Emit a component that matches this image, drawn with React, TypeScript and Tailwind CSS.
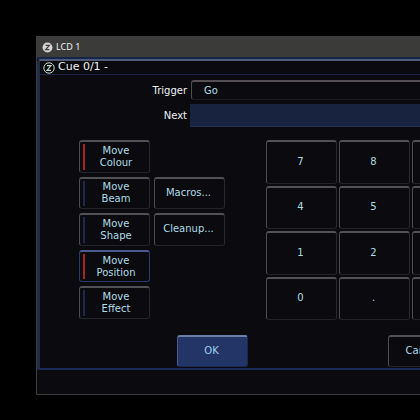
import { useState } from 'react'
import type { ReactNode } from 'react'
import clsx from 'clsx'

const OPTIONS = [
  { id: 'colour', label: 'Colour', on: true },
  { id: 'beam', label: 'Beam', on: false },
  { id: 'shape', label: 'Shape', on: false },
  { id: 'position', label: 'Position', on: true },
  { id: 'effect', label: 'Effect', on: false },
]

const KEYS = ['7', '8', '9', '4', '5', '6', '1', '2', '3', '0', '.', '/']

interface KeyProps {
  children: ReactNode
  className?: string
  onClick?: () => void
}

// bevelled console key: lit along the top and left, dark on the other two sides
function Key({ children, className, onClick }: KeyProps) {
  return (
    <button
      type="button"
      onClick={onClick}
      className={clsx(
        'cursor-pointer rounded-[3px] border border-t-2 border-b-[#232429] border-l-[#4c4d51] border-r-[#292a2f] border-t-[#515256] pr-0.5 text-center',
        className,
      )}
    >
      {children}
    </button>
  )
}

interface MoveToggleProps {
  label: string
  on: boolean
  focused: boolean
  onClick: () => void
}

function MoveToggle({ label, on, focused, onClick }: MoveToggleProps) {
  return (
    <button
      type="button"
      aria-pressed={on}
      onClick={onClick}
      className={clsx(
        'flex cursor-pointer items-stretch rounded-[3px] border border-t-2 pl-[3px] pr-0.5',
        focused
          ? 'border-[#2a3a70] border-t-[#4a5a8c]'
          : 'border-b-[#232429] border-l-[#4c4d51] border-r-[#292a2f] border-t-[#515256]',
      )}
    >
      <span className={clsx('my-0.5 w-0.5', on ? 'bg-[#a82424]' : 'bg-[#1e2750]')} />
      <span className="flex-1 self-center text-center leading-3">
        Move
        <br />
        {label}
      </span>
    </button>
  )
}

export default function App() {
  const [options, setOptions] = useState(OPTIONS)
  const [focused, setFocused] = useState('position')
  const [next, setNext] = useState('')

  const toggle = (id: string) => {
    setFocused(id)
    setOptions((prev) => prev.map((o) => (o.id === id ? { ...o, on: !o.on } : o)))
  }

  return (
    <div className="min-h-screen overflow-hidden bg-black pl-9 pt-9 font-['DejaVu_Sans',sans-serif] text-[10px] text-[#b0dce6]">
      <section className="min-w-[520px] border border-[#3d3d3d] bg-[#0a0a0f] pb-6">
        <header className="flex h-5 items-center gap-[3px] bg-[#3b3b3a] pl-[5px] font-['Noto_Sans',sans-serif] text-[9px] text-[#f0f0f0]">
          <svg viewBox="0 0 12 12" className="size-[11px]" aria-hidden="true">
            <circle cx="6" cy="6" r="5.4" fill="#d4d4d4" />
            <path d="M4 3.7h4L4 8.3h4" fill="none" stroke="#3b3b3a" strokeWidth="1.3" />
          </svg>
          LCD 1
        </header>

        <div className="border-t-2 border-t-[#14264a]">
          <div className="rounded-tl-[4px] rounded-bl-[2px] border-b-2 border-l-3 border-t-2 border-b-[#1b2a58] border-l-[#232b4a] border-t-[#515a78] pb-px">
            <h1 className="flex h-[14px] items-center gap-[3px] border-b border-[#1d2547] pl-[3px] text-[11px] text-[#f0f2f4]">
              <svg viewBox="0 0 12 12" className="size-3" aria-hidden="true">
                <circle cx="6" cy="6" r="5.2" fill="none" stroke="#c4dcd0" strokeWidth="1" />
                <path d="M4 3.6h4L4 8.4h4" fill="none" stroke="#c4dcd0" strokeWidth="1.1" />
              </svg>
              Cue 0/1 -
            </h1>

            <div className="mt-[5px] flex flex-col gap-1">
              <div className="flex h-5 items-center">
                <label htmlFor="trigger" className="w-[147px] text-right text-[#f0f2f4]">
                  Trigger
                </label>
                <button
                  id="trigger"
                  type="button"
                  className="ml-1 h-full flex-1 cursor-pointer rounded-l-[3px] border border-r-0 border-t-2 border-b-[#1a1f22] border-l-[#4c4d51] border-t-[#544f53] pl-3 text-left"
                >
                  Go
                </button>
              </div>
              <div className="flex h-[23px] items-center">
                <label htmlFor="next" className="w-[147px] text-right text-[#f0f2f4]">
                  Next
                </label>
                <input
                  id="next"
                  value={next}
                  onChange={(e) => setNext(e.target.value)}
                  className="ml-[3px] h-full min-w-0 flex-1 border-b border-[#1f3052] bg-[#18233f] px-3 outline-none"
                />
              </div>
            </div>

            <div className="ml-[39px] mt-[13px] flex h-[180px]">
              <div className="mb-px grid grid-cols-[71px_71px] grid-rows-5 gap-1">
                <div className="row-span-5 grid grid-rows-subgrid">
                  {options.map((o) => (
                    <MoveToggle
                      key={o.id}
                      label={o.label}
                      on={o.on}
                      focused={focused === o.id}
                      onClick={() => toggle(o.id)}
                    />
                  ))}
                </div>
                <Key className="col-start-2 row-start-2 pb-0.5">Macros...</Key>
                <Key className="col-start-2 row-start-3 pb-0.5">Cleanup...</Key>
              </div>

              <div className="ml-[41px] grid grid-cols-[71px_71px_71px] grid-rows-4 gap-0.5">
                {KEYS.map((k) => (
                  <Key key={k} className="pb-0.5" onClick={() => setNext(next + k)}>
                    {k}
                  </Key>
                ))}
              </div>
            </div>

            <footer className="ml-[137px] mt-[15px] flex gap-[140px]">
              <button
                type="button"
                className="h-8 w-[71px] cursor-pointer rounded-[3px] border border-t-2 border-b-[#1a2850] border-l-[#4b5c8c] border-r-[#1a2850] border-t-[#6d7fa8] bg-[#233566] pb-0.5 pr-0.5 text-[#9fd0f0]"
              >
                OK
              </button>
              <Key className="h-8 w-[71px] pb-0.5">Cancel</Key>
            </footer>
          </div>
        </div>
      </section>
    </div>
  )
}
